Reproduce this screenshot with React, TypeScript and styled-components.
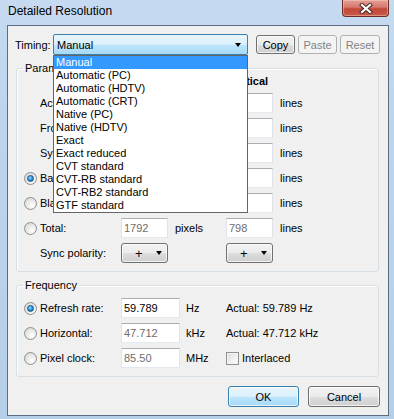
import React from 'react';
import styled, { createGlobalStyle, css } from 'styled-components';

const GlobalStyle = createGlobalStyle`
  html, body {
    margin: 0;
    padding: 0;
    background: #b9d1ea;
  }
  body {
    font-family: 'Liberation Sans', Arial, sans-serif;
    font-size: 11px;
    color: #000;
  }
`;

const Window = styled.div`
  width: 394px;
  height: 419px;
  box-sizing: border-box;
  padding: 0 5px 3px 7px;
  display: flex;
  flex-direction: column;
  background: linear-gradient(to bottom, #c6dbf1 0%, #bcd4ec 30%, #b6cfe9 100%);
`;

const TitleBar = styled.div`
  height: 25px;
  flex-shrink: 0;
  display: flex;
  justify-content: space-between;
  align-items: flex-start;
`;

const TitleText = styled.span`
  margin-left: 1px;
  padding-top: 4px;
  font-size: 12px;
  line-height: 14px;
  color: #000;
`;

const CloseButton = styled.div`
  width: 47px;
  height: 17px;
  box-sizing: border-box;
  border: 1px solid #6a2d25;
  border-top: none;
  border-radius: 0 0 4px 4px;
  background: linear-gradient(to bottom, #e3a197 0%, #d6776b 45%, #c4473a 55%, #c95a45 100%);
  display: flex;
  align-items: center;
  justify-content: center;
  box-shadow: inset 0 0 0 1px rgba(255, 210, 200, 0.45);
`;

const Client = styled.div`
  flex: 1;
  border: 1px solid #5b6d80;
  background: #f0f0f0;
  display: flex;
  flex-direction: column;
`;

const TimingRow = styled.div`
  display: flex;
  align-items: center;
  height: 21px;
  margin-top: 8px;
  padding-left: 7px;
`;

const TimingLabel = styled.span`
  width: 38px;
`;

const ComboWrap = styled.div`
  position: relative;
  width: 195px;
  height: 21px;
`;

const TimingCombo = styled.div`
  height: 100%;
  box-sizing: border-box;
  border: 1px solid #3c7fb1;
  border-radius: 2px;
  background: linear-gradient(to bottom, #eaf6fd 0%, #d9f0fc 50%, #bee6fd 51%, #a7d9f5 100%);
  display: flex;
  align-items: center;
  justify-content: space-between;
  padding: 0 6px 0 3px;
`;

const Arrow = styled.span`
  width: 0;
  height: 0;
  border-left: 3.5px solid transparent;
  border-right: 3.5px solid transparent;
  border-top: 4px solid #000;
`;

const DropList = styled.div`
  position: absolute;
  top: 100%;
  left: 0;
  width: 195px;
  box-sizing: border-box;
  border: 1px solid #646464;
  background: #fff;
  z-index: 10;
`;

const DropItem = styled.div<{ $selected?: boolean }>`
  height: 13px;
  line-height: 13px;
  padding-left: 2px;
  white-space: nowrap;
  ${({ $selected }) =>
    $selected &&
    css`
      background: #3399ff;
      color: #fff;
    `}
`;

const ButtonGroup = styled.div`
  display: flex;
  gap: 3px;
  margin-left: 8px;
`;

const PushButton = styled.div<{ $width: number; $height?: number; $disabled?: boolean; $default?: boolean }>`
  width: ${({ $width }) => $width}px;
  height: ${({ $height }) => $height ?? 19}px;
  box-sizing: border-box;
  border: 1px solid #707070;
  border-radius: 3px;
  display: flex;
  align-items: center;
  justify-content: center;
  background: linear-gradient(to bottom, #f2f2f2 0%, #ebebeb 50%, #dddddd 51%, #cfcfcf 100%);
  box-shadow: inset 0 0 0 1px rgba(255, 255, 255, 0.7);
  ${({ $disabled }) =>
    $disabled &&
    css`
      border-color: #adb2b5;
      background: #f4f4f4;
      color: #838383;
      box-shadow: none;
    `}
  ${({ $default }) =>
    $default &&
    css`
      border-color: #3c7fb1;
      background: linear-gradient(to bottom, #eaf6fd 0%, #d9f0fc 50%, #bee6fd 51%, #a7d9f5 100%);
    `}
`;

const GroupBox = styled.fieldset<{ $padTop?: number }>`
  margin: 7px 9px 0 8px;
  padding: ${({ $padTop }) => $padTop ?? 0}px 0 8px 7px;
  border: 1px solid #d5dfe5;
  border-radius: 3px;
  min-width: 0;
  box-shadow: inset 1px 1px 0 #fff;
`;

const Legend = styled.legend`
  margin-left: -1px;
  padding: 0 2px;
  line-height: 13px;
  font-size: 11px;
`;

const ParamGrid = styled.div`
  margin-top: -1px;
  display: grid;
  grid-template-columns: 16px 81px 47px 58px 47px auto;
  grid-template-rows: 14px;
  grid-auto-rows: 20px;
  row-gap: 5px;
  align-items: center;
`;

const FreqGrid = styled.div`
  display: grid;
  grid-template-columns: 16px 81px 59px 46px auto;
  grid-auto-rows: 20px;
  row-gap: 5px;
  align-items: center;
`;

const ColumnHead = styled.span<{ $col: number }>`
  grid-column: ${({ $col }) => $col};
  padding-left: 3px;
  font-weight: bold;
  line-height: 14px;
  white-space: nowrap;
`;

const Label = styled.span`
  grid-column: 2;
  white-space: nowrap;
`;

const Unit = styled.span`
  padding-left: 7px;
  white-space: nowrap;
`;

const FreqUnit = styled.span`
  padding-left: 6px;
  white-space: nowrap;
`;

const Field = styled.div<{ $disabled?: boolean }>`
  height: 20px;
  box-sizing: border-box;
  border: 1px solid #e2e3ea;
  border-top-color: #abadb3;
  border-bottom-color: #e3e9ef;
  background: #fff;
  padding-left: 2px;
  line-height: 18px;
  color: ${({ $disabled }) => ($disabled ? '#6d6d6d' : '#000')};
`;

const Radio = styled.span<{ $checked?: boolean }>`
  grid-column: 1;
  width: 13px;
  height: 13px;
  box-sizing: border-box;
  border-radius: 50%;
  border: 1px solid #8e8f8f;
  background: radial-gradient(circle at 65% 70%, #ffffff 0%, #e6e6e6 55%, #cfcfcf 100%);
  display: flex;
  align-items: center;
  justify-content: center;
  &::after {
    content: '';
    display: ${({ $checked }) => ($checked ? 'block' : 'none')};
    width: 7px;
    height: 7px;
    box-sizing: border-box;
    border-radius: 50%;
    border: 1px solid #1a4f7e;
    background: radial-gradient(circle at 40% 35%, #a6e1ff 0%, #2c9be0 45%, #0a5fa6 100%);
  }
`;

const PolaritySelect = styled.div`
  height: 20px;
  box-sizing: border-box;
  border: 1px solid #707070;
  border-radius: 3px;
  background: linear-gradient(to bottom, #f2f2f2 0%, #ebebeb 50%, #dddddd 51%, #cfcfcf 100%);
  box-shadow: inset 0 0 0 1px rgba(255, 255, 255, 0.7);
  display: flex;
  align-items: center;
  padding: 0 5px 0 13px;
  justify-content: space-between;
  font-size: 13px;
`;

const ActualText = styled.span`
  white-space: nowrap;
`;

const CheckRow = styled.label`
  display: flex;
  align-items: center;
  gap: 3px;
`;

const CheckBox = styled.span`
  width: 13px;
  height: 13px;
  box-sizing: border-box;
  border: 1px solid #8e8f8f;
  background: linear-gradient(135deg, #dcdcdc 0%, #f2f2f2 60%, #ffffff 100%);
  box-shadow: inset 0 0 0 1px #f4f4f4;
`;

const Footer = styled.div`
  display: flex;
  justify-content: flex-end;
  gap: 9px;
  margin: 9px 8px 0 0;
`;

const timingOptions = [
  'Manual',
  'Automatic (PC)',
  'Automatic (HDTV)',
  'Automatic (CRT)',
  'Native (PC)',
  'Native (HDTV)',
  'Exact',
  'Exact reduced',
  'CVT standard',
  'CVT-RB standard',
  'CVT-RB2 standard',
  'GTF standard',
];

interface ParamRow {
  label: string;
  h: string;
  v: string;
  radio?: boolean;
  checked?: boolean;
  disabled?: boolean;
}

const paramRows: ParamRow[] = [
  { label: 'Active:', h: '1366', v: '768' },
  { label: 'Front porch:', h: '70', v: '3' },
  { label: 'Sync width:', h: '143', v: '6' },
  { label: 'Back porch:', h: '213', v: '21', radio: true, checked: true },
  { label: 'Blanking:', h: '426', v: '30', radio: true, disabled: true },
  { label: 'Total:', h: '1792', v: '798', radio: true, disabled: true },
];

const CloseGlyph = () => (
  <svg width="14" height="11" viewBox="0 0 14 11">
    <path d="M3 2 L11 9 M11 2 L3 9" stroke="#4a2a26" strokeWidth="4.2" strokeLinecap="square" />
    <path d="M3 2 L11 9 M11 2 L3 9" stroke="#fff" strokeWidth="2.2" strokeLinecap="square" />
  </svg>
);

const App = () => (
  <>
    <GlobalStyle />
    <Window>
      <TitleBar>
        <TitleText>Detailed Resolution</TitleText>
        <CloseButton>
          <CloseGlyph />
        </CloseButton>
      </TitleBar>
      <Client>
        <TimingRow>
          <TimingLabel>Timing:</TimingLabel>
          <ComboWrap>
            <TimingCombo>
              <span>Manual</span>
              <Arrow />
            </TimingCombo>
            <DropList>
              {timingOptions.map((opt, i) => (
                <DropItem key={opt} $selected={i === 0}>
                  {opt}
                </DropItem>
              ))}
            </DropList>
          </ComboWrap>
          <ButtonGroup>
            <PushButton $width={39}>Copy</PushButton>
            <PushButton $width={39} $disabled>
              Paste
            </PushButton>
            <PushButton $width={40} $disabled>
              Reset
            </PushButton>
          </ButtonGroup>
        </TimingRow>

        <GroupBox>
          <Legend>Parameters</Legend>
          <ParamGrid>
            <ColumnHead $col={3}>Horizontal</ColumnHead>
            <ColumnHead $col={5}>Vertical</ColumnHead>
            {paramRows.map((row) => (
              <React.Fragment key={row.label}>
                {row.radio ? <Radio $checked={row.checked} /> : <span />}
                <Label>{row.label}</Label>
                <Field $disabled={row.disabled}>{row.h}</Field>
                <Unit>pixels</Unit>
                <Field $disabled={row.disabled}>{row.v}</Field>
                <Unit>lines</Unit>
              </React.Fragment>
            ))}
            <span />
            <Label>Sync polarity:</Label>
            <PolaritySelect>
              <span>+</span>
              <Arrow />
            </PolaritySelect>
            <span />
            <PolaritySelect>
              <span>+</span>
              <Arrow />
            </PolaritySelect>
          </ParamGrid>
        </GroupBox>

        <GroupBox $padTop={6}>
          <Legend>Frequency</Legend>
          <FreqGrid>
            <Radio $checked />
            <Label>Refresh rate:</Label>
            <Field>59.789</Field>
            <FreqUnit>Hz</FreqUnit>
            <ActualText>Actual: 59.789 Hz</ActualText>

            <Radio />
            <Label>Horizontal:</Label>
            <Field $disabled>47.712</Field>
            <FreqUnit>kHz</FreqUnit>
            <ActualText>Actual: 47.712 kHz</ActualText>

            <Radio />
            <Label>Pixel clock:</Label>
            <Field $disabled>85.50</Field>
            <FreqUnit>MHz</FreqUnit>
            <CheckRow>
              <CheckBox />
              Interlaced
            </CheckRow>
          </FreqGrid>
        </GroupBox>

        <Footer>
          <PushButton $width={71} $height={21} $default>
            OK
          </PushButton>
          <PushButton $width={72} $height={21}>
            Cancel
          </PushButton>
        </Footer>
      </Client>
    </Window>
  </>
);

export default App;
